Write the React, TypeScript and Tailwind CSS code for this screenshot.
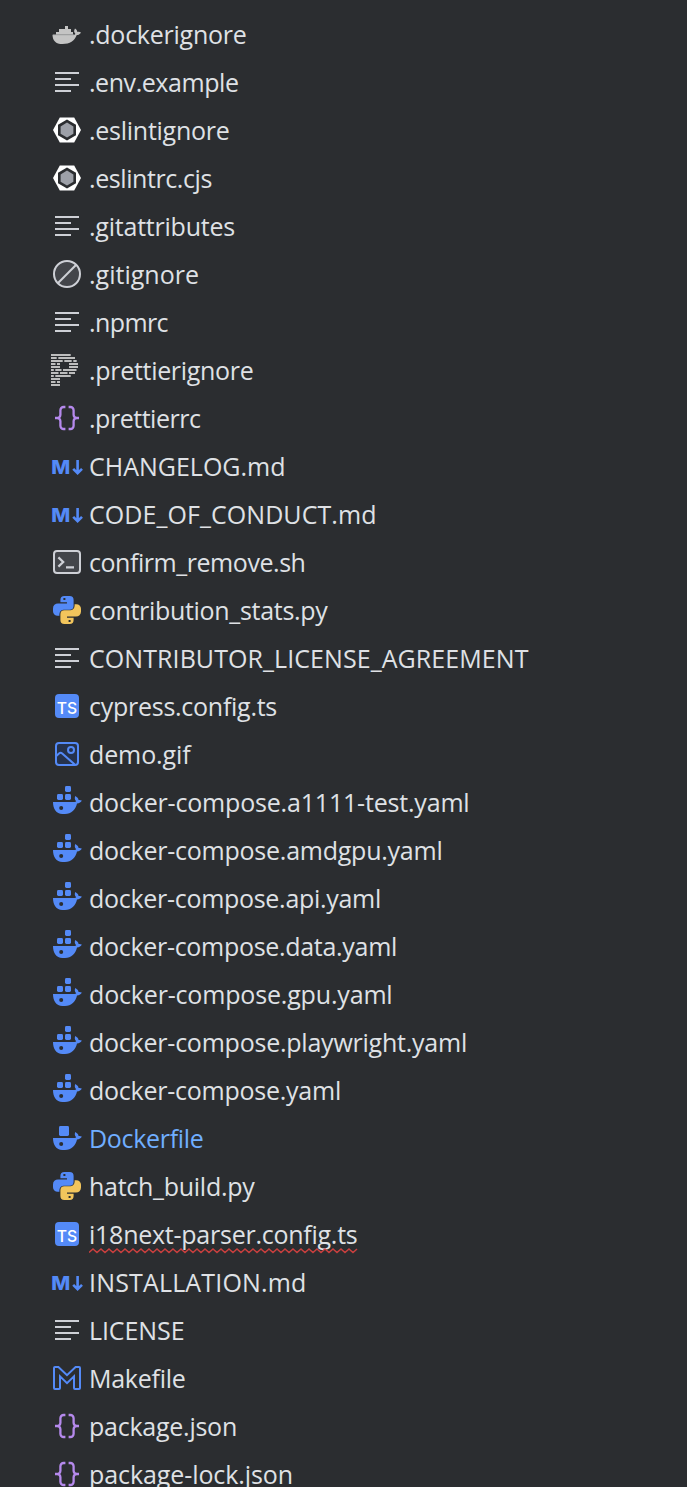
import { useLayoutEffect, useRef, type ReactNode } from 'react';

type IconName =
    | 'dockerignore'
    | 'text'
    | 'eslint'
    | 'ignored'
    | 'prettier'
    | 'json'
    | 'markdown'
    | 'shell'
    | 'python'
    | 'typescript'
    | 'image'
    | 'compose'
    | 'dockerfile'
    | 'makefile';

interface FileItem {
    name: string;
    icon: IconName;
    width: number;
    status?: 'modified' | 'error';
}

const files: FileItem[] = [
    { name: '.dockerignore', icon: 'dockerignore', width: 157.5 },
    { name: '.env.example', icon: 'text', width: 149.5 },
    { name: '.eslintignore', icon: 'eslint', width: 140.5 },
    { name: '.eslintrc.cjs', icon: 'eslint', width: 123 },
    { name: '.gitattributes', icon: 'text', width: 146 },
    { name: '.gitignore', icon: 'ignored', width: 110 },
    { name: '.npmrc', icon: 'text', width: 79 },
    { name: '.prettierignore', icon: 'prettier', width: 164.5 },
    { name: '.prettierrc', icon: 'json', width: 111.5 },
    { name: 'CHANGELOG.md', icon: 'markdown', width: 196.5 },
    { name: 'CODE_OF_CONDUCT.md', icon: 'markdown', width: 287.5 },
    { name: 'confirm_remove.sh', icon: 'shell', width: 216.5 },
    { name: 'contribution_stats.py', icon: 'python', width: 238.5 },
    { name: 'CONTRIBUTOR_LICENSE_AGREEMENT', icon: 'text', width: 439.5 },
    { name: 'cypress.config.ts', icon: 'typescript', width: 188 },
    { name: 'demo.gif', icon: 'image', width: 101.5 },
    { name: 'docker-compose.a1111-test.yaml', icon: 'compose', width: 380.5 },
    { name: 'docker-compose.amdgpu.yaml', icon: 'compose', width: 353.5 },
    { name: 'docker-compose.api.yaml', icon: 'compose', width: 292 },
    { name: 'docker-compose.data.yaml', icon: 'compose', width: 308 },
    { name: 'docker-compose.gpu.yaml', icon: 'compose', width: 303.5 },
    { name: 'docker-compose.playwright.yaml', icon: 'compose', width: 378 },
    { name: 'docker-compose.yaml', icon: 'compose', width: 252 },
    { name: 'Dockerfile', icon: 'dockerfile', width: 114.5, status: 'modified' },
    { name: 'hatch_build.py', icon: 'python', width: 165.5 },
    { name: 'i18next-parser.config.ts', icon: 'typescript', width: 268.5, status: 'error' },
    { name: 'INSTALLATION.md', icon: 'markdown', width: 217.5 },
    { name: 'LICENSE', icon: 'text', width: 95.5 },
    { name: 'Makefile', icon: 'makefile', width: 96.5 },
    { name: 'package.json', icon: 'json', width: 148 },
    { name: 'package-lock.json', icon: 'json', width: 204 },
];

// Dashes of the prettier logo: [row, start, end]
const prettierDashes = [
    [0, 0, 19.7],
    [1, 0, 5.7], [1, 7.3, 24],
    [2, 0, 11.7], [2, 13.3, 20.7], [2, 22.3, 25.7],
    [3, 0, 4.5], [3, 6, 9], [3, 18, 27],
    [4, 0, 9], [4, 18, 27],
    [5, 0, 2.8], [5, 4.3, 10.5], [5, 12, 25.5],
    [6, 0, 7.5], [6, 9, 16.5], [6, 18, 24],
    [7, 0, 2.8], [7, 4.3, 19.7],
    [8, 0, 9],
    [9, 0, 4.5], [9, 6, 9],
    [10, 0, 9],
];

const whale =
    'M1 8h10.8c.4 0 .6-.1.8-.4-.8-.7-.9-1.800-.4-2.600.9.6 1.500 1.200 1.600 2 .5-.1 1.100 0 1.600.3-.4.9-1.200 1.400-2.400 1.500C12.300 12 10.200 14 7 14H5.700C2.600 14 1 11.400 1 8Zm4.100 2a1 1 0 1 0 0 2 1 1 0 0 0 0-2Z';

const snake =
    'M4.7 3a2 2 0 0 1 2-2h2.600a2 2 0 0 1 2 2v2.900a2 2 0 0 1-2 2H6.400a2.200 2.200 0 0 0-2.200 2.200v.8h-.9A2.300 2.300 0 0 1 1 8.600V7.200a2.500 2.500 0 0 1 2.500-2.500H8v-.6H4.700V3Zm1.500-1v1h1V2h-1Z';

const icons: Record<IconName, ReactNode> = {
    dockerignore: (
        <g fill="#c4c4c4" transform="scale(.5)">
            <path d="M14 8h3v3h3v3h2v2.700H5V14h3v-3h6V8Z" />
            <path d="M1.500 16.700h21.200c1 0 1.500-.4 1.600-1-1.500-1.500-1.500-3.200-.3-5.200 1.500 1 2.200 2.200 2.300 3.400 1.200-.3 2.600-.2 3.700.5-.8 1.600-2.200 2.500-4.200 2.600C23.400 23 19 26 11.500 26 4.600 26 1.600 22.500 1.500 16.700Z" />
            <path d="M2 16.500h21v.7H2Z" fill="#98999b" />
        </g>
    ),
    text: <path d="M2 3.500h12M2 6.500h8M2 9.500h12M2 12.500h8" stroke="#ced0d6" />,
    eslint: (
        <>
            <path d="M4.400 1.700h7.200L15 8l-3.400 6.300H4.400L1 8Z" fill="#fff" />
            <path d="m8 2.800 4.500 2.600v5.200L8 13.300l-4.500-2.700V5.400Z" fill="#2b2d30" />
            <path d="m8 4.300 3.200 1.900v3.700L8 11.800 4.800 9.900V6.200Z" fill="#9da0a8" />
        </>
    ),
    ignored: (
        <g fill="#43454a" stroke="#ced0d6">
            <circle cx="8" cy="8" r="6.5" />
            <path d="m3.400 12.600 9.200-9.200" />
        </g>
    ),
    prettier: (
        <g fill="#bdbdbd" transform="scale(.5)">
            {prettierDashes.map(([row, start, end]) => (
                <rect key={`${row}-${start}`} x={start} y={row * 3} width={end - start} height="2" />
            ))}
        </g>
    ),
    json: (
        <g stroke="#b589ec" strokeWidth="1.15">
            <path d="M7.200 2.500h-.9a1.600 1.600 0 0 0-1.600 1.600v2.300A1.600 1.600 0 0 1 3.100 8H2h1.100a1.600 1.600 0 0 1 1.600 1.600v2.300a1.600 1.600 0 0 0 1.600 1.600h.9" />
            <path d="M8.800 2.500h.9a1.600 1.600 0 0 1 1.600 1.600v2.300A1.600 1.600 0 0 0 12.900 8H14h-1.100a1.600 1.600 0 0 0-1.600 1.600v2.300a1.600 1.600 0 0 1-1.600 1.600h-.9" />
        </g>
    ),
    markdown: (
        <>
            <text x=".1" y="12" fill="#548af7" fontSize="9.6" fontWeight="800" textLength="9.5" lengthAdjust="spacingAndGlyphs" className="font-['Inter',sans-serif]">
                M
            </text>
            <path d="M13.300 5v6.500M11.100 9.400l2.200 2.200 2.200-2.200" stroke="#548af7" strokeWidth="1.3" />
        </>
    ),
    shell: (
        <g stroke="#ced0d6">
            <rect x="1.5" y="2.5" width="13" height="11" rx="1.5" fill="#43454a" />
            <path d="M3.700 5.700 6.100 8l-2.400 2.300M7.500 10.700h4" strokeWidth="1.1" />
        </g>
    ),
    python: (
        <g fillRule="evenodd">
            <path d={snake} fill="#548af7" />
            <path d={snake} fill="#f2c55c" transform="rotate(180 8 8)" />
        </g>
    ),
    typescript: (
        <>
            <rect x="2" y="2" width="12" height="12" rx="2" fill="#548af7" />
            <text x="2.9" y="12" fill="#fff" fontSize="7.8" fontWeight="500" textLength="10.2" lengthAdjust="spacingAndGlyphs" className="font-['Inter',sans-serif]">
                TS
            </text>
        </>
    ),
    image: (
        <g stroke="#548af7">
            <rect x="2.5" y="2.5" width="11" height="11" rx="1.5" fill="#25324d" />
            <circle cx="10" cy="6" r="1.5" />
            <path d="m2.500 9.100 1.500-1.400a1.200 1.200 0 0 1 1.600 0l6.300 5.600" />
        </g>
    ),
    compose: (
        <g fill="#548af7">
            <rect x="7" y="0" width="3" height="3" rx=".7" />
            <rect x="3" y="4" width="3" height="3" rx=".7" />
            <rect x="7" y="4" width="3" height="3" rx=".7" />
            <path d={whale} fillRule="evenodd" />
        </g>
    ),
    dockerfile: (
        <g fill="#548af7">
            <rect x="4" y="2" width="5" height="5" rx=".7" />
            <path d={whale} fillRule="evenodd" />
        </g>
    ),
    makefile: (
        <path
            d="M1.500 3a.5.5 0 0 1 .5-.5h1.700L8 6.600l4.300-4.100H14a.5.5 0 0 1 .5.5v10a.5.5 0 0 1-.5.5h-2a.5.5 0 0 1-.5-.5V7.200L8 10.600 4.500 7.200V13a.5.5 0 0 1-.5.5H2a.5.5 0 0 1-.5-.5V3Z"
            stroke="#548af7"
        />
    ),
};

function FileIcon({ name }: { name: IconName }) {
    return (
        <svg viewBox="0 0 16 16" fill="none" className="w-8 h-8 shrink-0 overflow-visible">
            {icons[name]}
        </svg>
    );
}

function Squiggle({ width }: { width: number }) {
    const points = [];
    for (let x = 0; x <= width; x += 4) {
        points.push(`${x},${(x / 4) % 2 ? 1 : 4.5}`);
    }
    return (
        <svg width={width} height="6" className="absolute left-0 top-[31px] h-1.5">
            <polyline points={points.join(' ')} fill="none" stroke="#c9403f" strokeWidth="1.5" />
        </svg>
    );
}

function FileName({ file }: { file: FileItem }) {
    const ref = useRef<HTMLSpanElement>(null);

    // Spread the name evenly over the width it is given
    useLayoutEffect(() => {
        const el = ref.current;
        if (!el) return;
        el.style.letterSpacing = '0px';
        const natural = el.getBoundingClientRect().width;
        el.style.letterSpacing = `${(file.width - natural) / file.name.length}px`;
    }, [file]);

    return (
        <span ref={ref} className={file.status === 'modified' ? 'relative leading-[34px] text-[#70aeff]' : 'relative leading-[34px] text-[#dfe1e5]'}>
            {file.name}
            {file.status === 'error' && <Squiggle width={file.width} />}
        </span>
    );
}

export default function App() {
    return (
        <div className="h-[1487px] overflow-hidden bg-[#2b2d30] pt-2.5 font-['Open_Sans','Noto_Sans',sans-serif] text-[25px]">
            <ul>
                {files.map((file) => (
                    <li key={file.name} className="flex h-12 items-center gap-1.5 pl-[51px] whitespace-nowrap">
                        <FileIcon name={file.icon} />
                        <FileName file={file} />
                    </li>
                ))}
            </ul>
        </div>
    );
}
